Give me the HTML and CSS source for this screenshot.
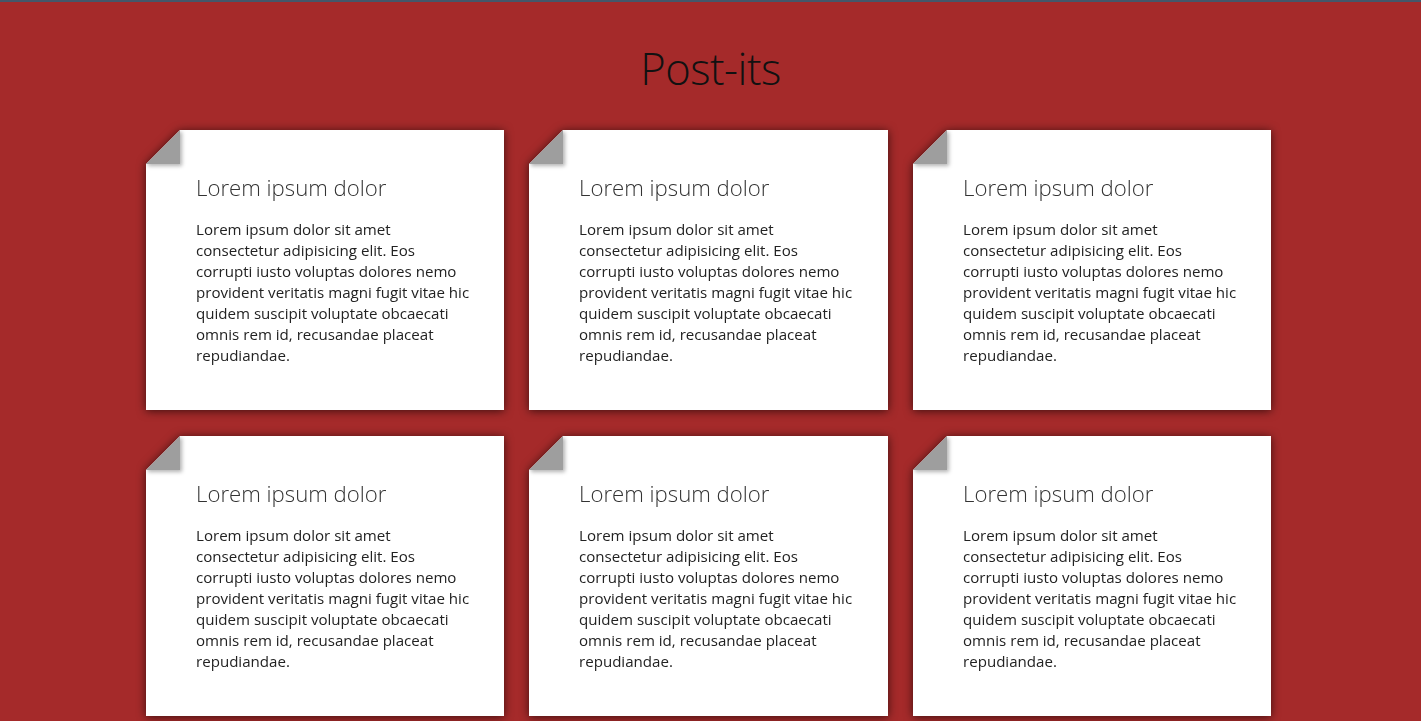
FILE: index.html
```html
<!DOCTYPE html>
<html lang="en">
<head>
<meta charset="utf-8">
<title>Post-its</title>
<link rel="stylesheet" href="styles.css">
</head>
<body>
<div class="topbar"></div>
<h1 class="page-title">Post-its</h1>
<main class="board">
  <article class="note"><div class="note-body"><span class="fold"></span><h2 class="note-title">Lorem ipsum dolor</h2><p class="note-text">Lorem ipsum dolor sit amet<br>consectetur adipisicing elit. Eos<br>corrupti iusto voluptas dolores nemo<br>provident veritatis magni fugit vitae hic<br>quidem suscipit voluptate obcaecati<br>omnis rem id, recusandae placeat<br>repudiandae.</p></div></article>
  <article class="note"><div class="note-body"><span class="fold"></span><h2 class="note-title">Lorem ipsum dolor</h2><p class="note-text">Lorem ipsum dolor sit amet<br>consectetur adipisicing elit. Eos<br>corrupti iusto voluptas dolores nemo<br>provident veritatis magni fugit vitae hic<br>quidem suscipit voluptate obcaecati<br>omnis rem id, recusandae placeat<br>repudiandae.</p></div></article>
  <article class="note"><div class="note-body"><span class="fold"></span><h2 class="note-title">Lorem ipsum dolor</h2><p class="note-text">Lorem ipsum dolor sit amet<br>consectetur adipisicing elit. Eos<br>corrupti iusto voluptas dolores nemo<br>provident veritatis magni fugit vitae hic<br>quidem suscipit voluptate obcaecati<br>omnis rem id, recusandae placeat<br>repudiandae.</p></div></article>
  <article class="note"><div class="note-body"><span class="fold"></span><h2 class="note-title">Lorem ipsum dolor</h2><p class="note-text">Lorem ipsum dolor sit amet<br>consectetur adipisicing elit. Eos<br>corrupti iusto voluptas dolores nemo<br>provident veritatis magni fugit vitae hic<br>quidem suscipit voluptate obcaecati<br>omnis rem id, recusandae placeat<br>repudiandae.</p></div></article>
  <article class="note"><div class="note-body"><span class="fold"></span><h2 class="note-title">Lorem ipsum dolor</h2><p class="note-text">Lorem ipsum dolor sit amet<br>consectetur adipisicing elit. Eos<br>corrupti iusto voluptas dolores nemo<br>provident veritatis magni fugit vitae hic<br>quidem suscipit voluptate obcaecati<br>omnis rem id, recusandae placeat<br>repudiandae.</p></div></article>
  <article class="note"><div class="note-body"><span class="fold"></span><h2 class="note-title">Lorem ipsum dolor</h2><p class="note-text">Lorem ipsum dolor sit amet<br>consectetur adipisicing elit. Eos<br>corrupti iusto voluptas dolores nemo<br>provident veritatis magni fugit vitae hic<br>quidem suscipit voluptate obcaecati<br>omnis rem id, recusandae placeat<br>repudiandae.</p></div></article>
</main>
</body>
</html>
```
FILE: styles.css
```css
html, body {
  margin: 0;
  padding: 0;
}
body {
  background: #a52a2a;
  font-family: "Open Sans", "Noto Sans", sans-serif;
  min-height: 721px;
  overflow: hidden;
}
.topbar {
  height: 2px;
  background: #44576a;
}
.page-title {
  margin: 0;
  padding-top: 37px;
  height: 90px;
  box-sizing: border-box;
  text-align: center;
  font-weight: 300;
  font-size: 43.5px;
  line-height: 60px;
  color: #111;
  letter-spacing: -0.5px;
}
.board {
  width: 1125px;
  margin: 38px 0 0 146px;
  display: grid;
  grid-template-columns: 358px 359px 358px;
  column-gap: 25px;
  row-gap: 26px;
}
.note {
  filter: drop-shadow(0 1px 5px rgba(0, 0, 0, 0.65));
}
.note-body {
  position: relative;
  background: #fff;
  height: 280px;
  box-sizing: border-box;
  padding: 43px 10px 0 50px;
  clip-path: polygon(34px 0, 100% 0, 100% 100%, 0 100%, 0 34px);
}
.fold {
  position: absolute;
  top: 0;
  left: 0;
  width: 34px;
  height: 34px;
  background: #9e9e9e;
  box-shadow: 2px 2px 4px rgba(0, 0, 0, 0.3);
}
.note-title {
  margin: 0;
  font-size: 22.2px;
  font-weight: 300;
  line-height: 30px;
  color: #333;
}
.note-text {
  margin: 16px 0 0;
  font-size: 15.1px;
  line-height: 21px;
  color: #222;
  white-space: nowrap;
}
```
